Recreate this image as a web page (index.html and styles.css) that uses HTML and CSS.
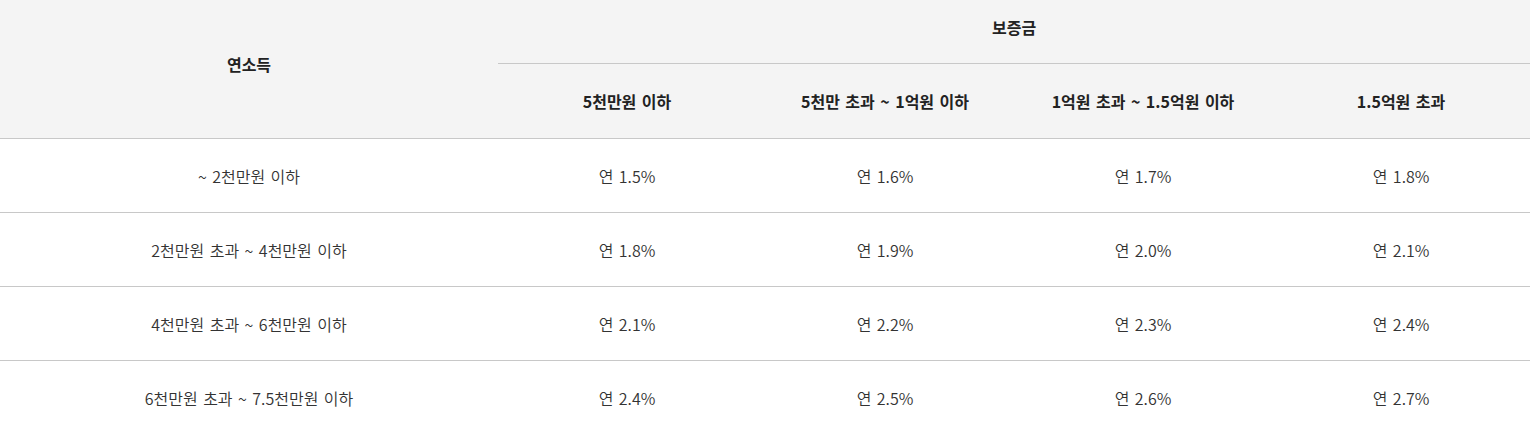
FILE: index.html
```html
<!DOCTYPE html>
<html lang="ko">
<head>
<meta charset="utf-8">
<link rel="stylesheet" href="styles.css">
</head>
<body>
<table class="rate-table">
  <colgroup>
    <col class="col-income">
    <col class="col-dep">
    <col class="col-dep">
    <col class="col-dep">
    <col class="col-dep">
  </colgroup>
  <thead>
    <tr class="head-top">
      <th rowspan="2" class="th-income">연소득</th>
      <th colspan="4" class="th-group">보증금</th>
    </tr>
    <tr class="head-sub">
      <th>5천만원 이하</th>
      <th>5천만 초과 ~ 1억원 이하</th>
      <th>1억원 초과 ~ 1.5억원 이하</th>
      <th>1.5억원 초과</th>
    </tr>
  </thead>
  <tbody>
    <tr><td>~ 2천만원 이하</td><td>연 1.5%</td><td>연 1.6%</td><td>연 1.7%</td><td>연 1.8%</td></tr>
    <tr><td>2천만원 초과 ~ 4천만원 이하</td><td>연 1.8%</td><td>연 1.9%</td><td>연 2.0%</td><td>연 2.1%</td></tr>
    <tr><td>4천만원 초과 ~ 6천만원 이하</td><td>연 2.1%</td><td>연 2.2%</td><td>연 2.3%</td><td>연 2.4%</td></tr>
    <tr><td>6천만원 초과 ~ 7.5천만원 이하</td><td>연 2.4%</td><td>연 2.5%</td><td>연 2.6%</td><td>연 2.7%</td></tr>
  </tbody>
</table>
</body>
</html>
```
FILE: styles.css
```css
html, body {
  margin: 0;
  padding: 0;
  background: #ffffff;
}

body {
  font-family: "Noto Sans CJK KR", "Noto Sans", sans-serif;
  font-size: 16px;
  color: #333333;
}

.rate-table {
  width: 1530px;
  border-collapse: collapse;
  table-layout: fixed;
}

.col-income {
  width: 498px;
}

.col-dep {
  width: 258px;
}

.rate-table thead th {
  background: #f4f4f4;
  color: #222222;
  font-weight: 700;
  text-align: center;
  vertical-align: middle;
  padding: 0;
  line-height: 20px;
  word-spacing: 1px;
}

.head-top th {
  height: 54px;
}

.rate-table thead .th-income {
  border-bottom: 1px solid #c8c8c8;
  padding-bottom: 10px;
}

.rate-table thead .th-group {
  border-bottom: 1px solid #c8c8c8;
  padding-bottom: 9px;
}

.head-sub th {
  height: 74px;
  border-bottom: 1px solid #c8c8c8;
}

.rate-table tbody td {
  height: 73px;
  padding: 0;
  line-height: 20px;
  text-align: center;
  vertical-align: middle;
  border-bottom: 1px solid #c8c8c8;
  color: #333333;
  font-weight: 350;
  word-spacing: 1px;
}
```
